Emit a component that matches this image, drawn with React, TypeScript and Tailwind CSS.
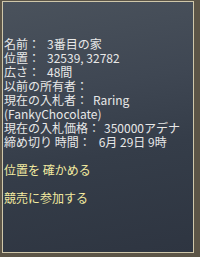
const rows: { label: string; value?: string; gap?: string }[] = [
  { label: '名前：', value: '3番目の家', gap: 'ml-[7px]' },
  { label: '位置：', value: '32539, 32782', gap: 'ml-[7px]' },
  { label: '広さ：', value: '48間', gap: 'ml-[7px]' },
  { label: '以前の所有者：' },
  { label: '現在の入札者：', value: 'Raring', gap: 'ml-[5px]' },
  { label: '(FankyChocolate)' },
  { label: '現在の入札価格：', value: '350000アデナ', gap: 'ml-[4px]' },
  { label: '締め切り 時間：', value: '6月 29日 9時', gap: 'ml-[8px]' },
];

export default function App() {
  return (
    <div
      className="w-[200px] h-[257px] bg-[#5c5547] pl-[2px] pt-[1px] pr-[6px] pb-[4px]"
      style={{ fontFamily: '"Noto Sans CJK JP", "Liberation Sans", sans-serif' }}
    >
      <div className="h-full border border-[#cfc7aa] bg-[linear-gradient(170deg,#4a525c_0%,#3f4753_35%,#353d49_60%,#2e3541_100%)] overflow-hidden">
        <div className="pt-[35px] pl-[1px] text-[12px] leading-[14px] text-[#e8e8e8]">
          {rows.map((r) => (
            <div key={r.label} className="flex whitespace-nowrap">
              <span>{r.label}</span>
              {r.value && <span className={r.gap}>{r.value}</span>}
            </div>
          ))}
          <div className="mt-[14px] text-[#f2eaa0]">位置を 確かめる</div>
          <div className="mt-[14px] text-[#f2eaa0]">競売に参加する</div>
        </div>
      </div>
    </div>
  );
}
